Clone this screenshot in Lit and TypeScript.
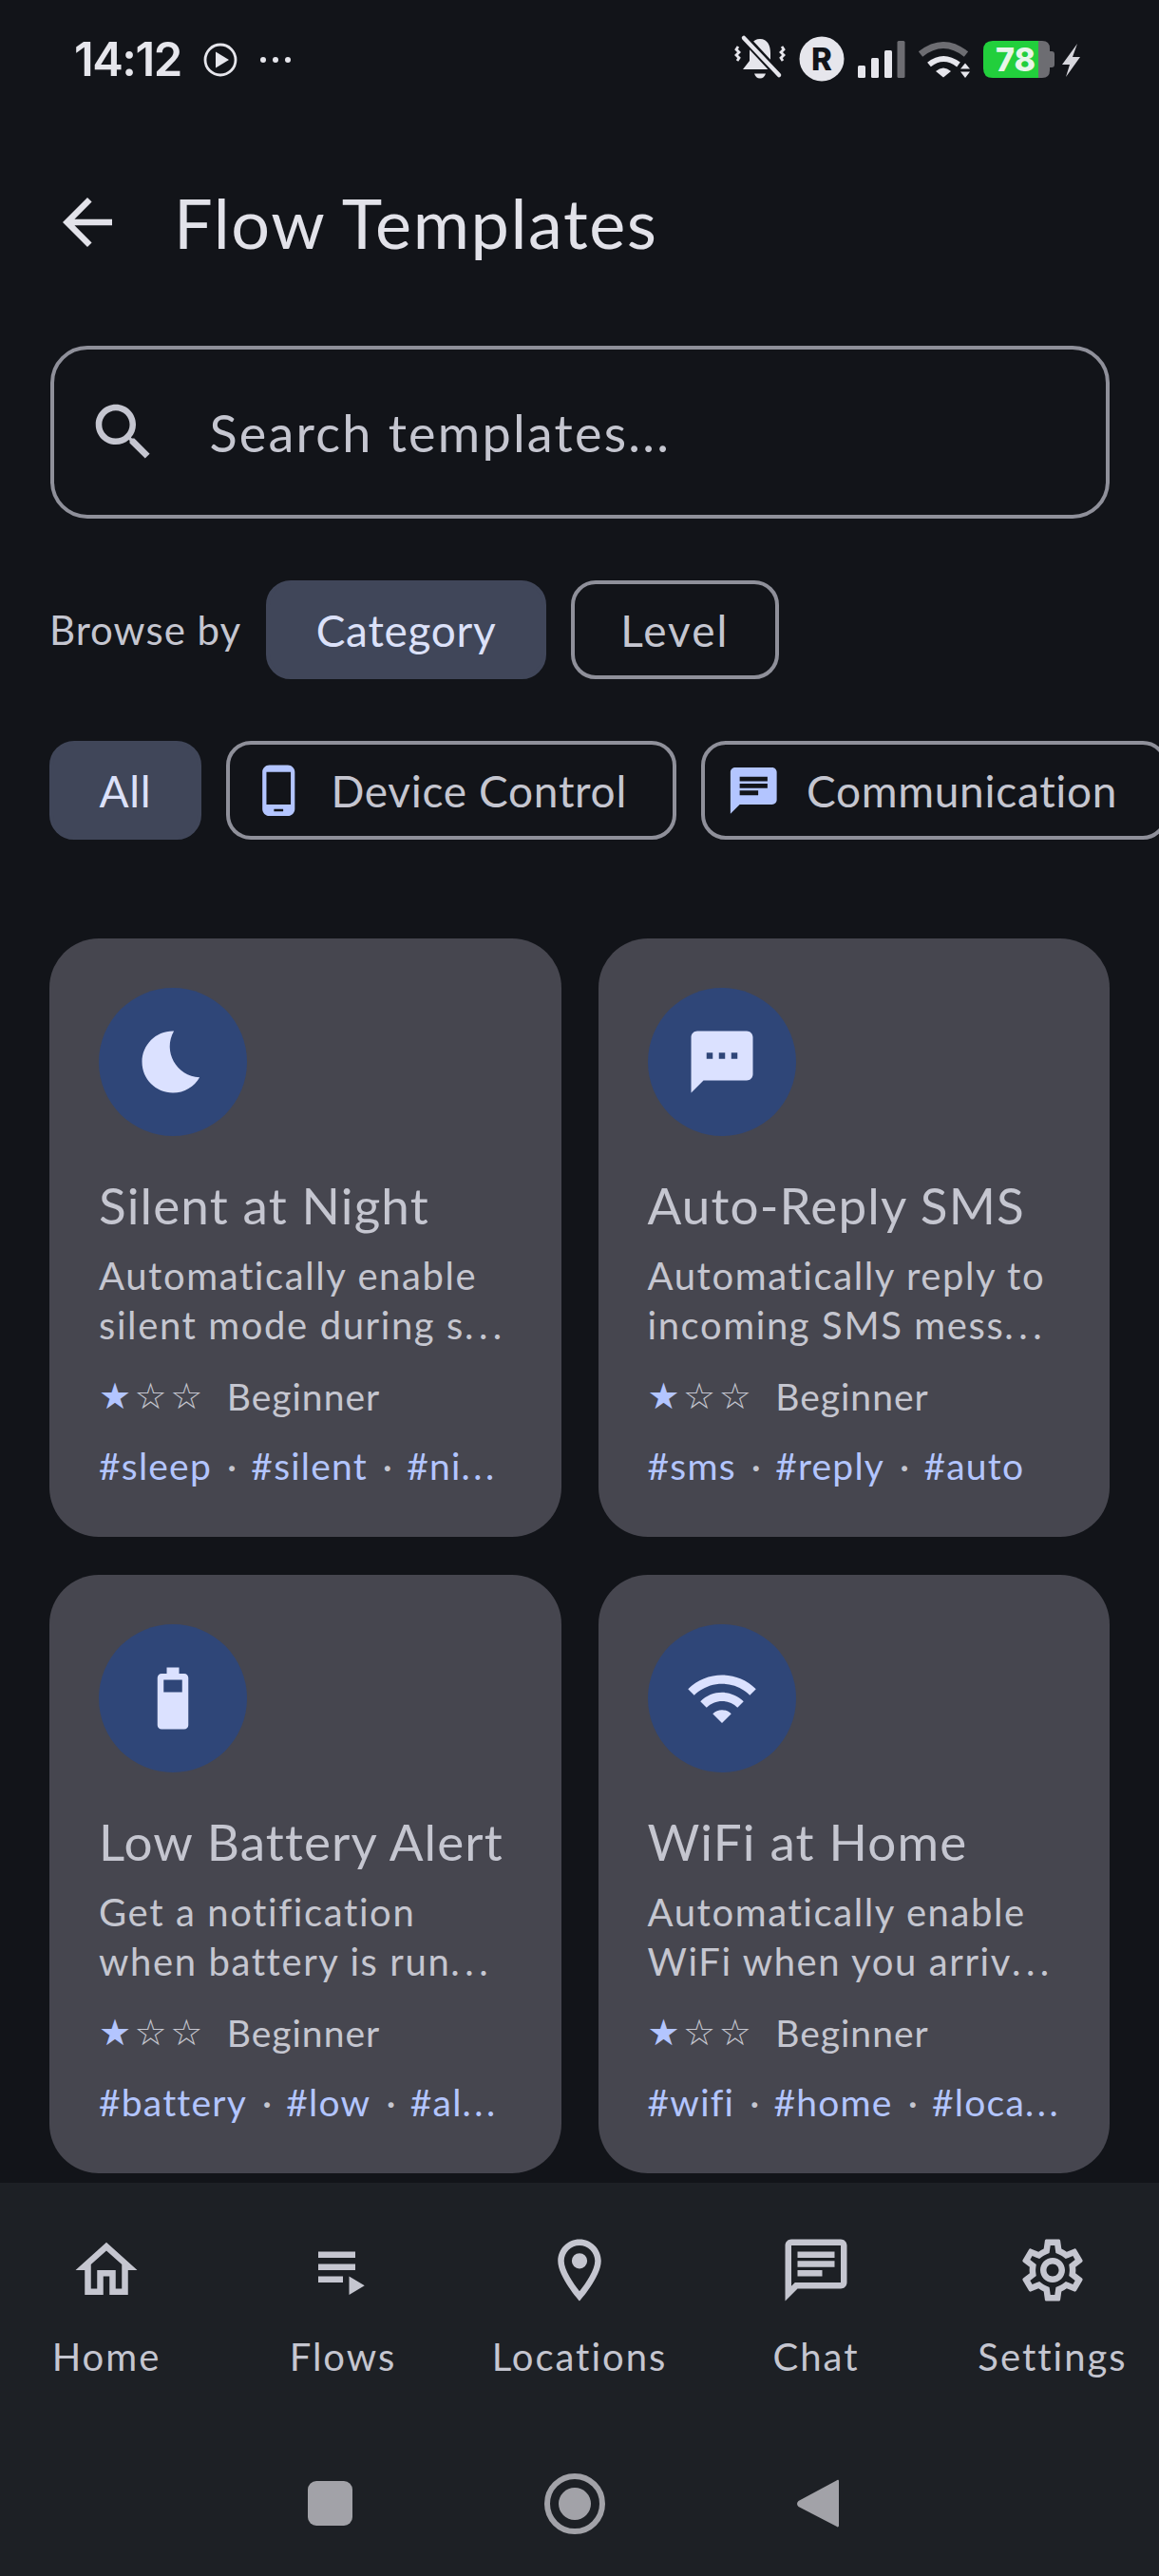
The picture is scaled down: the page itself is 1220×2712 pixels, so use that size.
import { LitElement, html, css, svg } from "lit";
import { customElement } from "lit/decorators.js";

const P = {
  back: "M20 11H7.83l5.59-5.59L12 4l-8 8 8 8 1.41-1.41L7.83 13H20v-2z",
  search: "M15.5 14h-.79l-.28-.27C15.41 12.59 16 11.11 16 9.5 16 5.91 13.09 3 9.5 3S3 5.91 3 9.5 5.91 16 9.5 16c1.61 0 3.09-.59 4.23-1.57l.27.28v.79l5 4.99L20.49 19l-4.99-5zm-6 0C7.01 14 5 11.99 5 9.5S7.01 5 9.5 5 14 7.01 14 9.5 11.99 14 9.5 14z",
  phone: "M16 1H8C6.34 1 5 2.34 5 4v16c0 1.66 1.34 3 3 3h8c1.66 0 3-1.34 3-3V4c0-1.66-1.34-3-3-3zm-2 20h-4v-1h4v1zm3.25-3H6.75V4h10.5v14z",
  chatFill: "M20 2H4c-1.1 0-2 .9-2 2v18l4-4h14c1.1 0 2-.9 2-2V4c0-1.1-.9-2-2-2zM6 9h12v2H6V9zm8 5H6v-2h8v2zm4-6H6V6h12v2z",
  moon: "M12.34 2.02C6.59 1.82 2 6.42 2 12c0 5.52 4.48 10 10 10 3.71 0 6.93-2.02 8.66-5.02-7.51-.25-12.09-8.43-8.32-14.96z",
  sms: "M20 2H4c-1.1 0-1.99.9-1.99 2L2 22l4-4h14c1.1 0 2-.9 2-2V4c0-1.1-.9-2-2-2zM9 11H7V9h2v2zm4 0h-2V9h2v2zm4 0h-2V9h2v2z",
  battery: "M15.67 4H14V2h-4v2H8.33C7.6 4 7 4.6 7 5.33v15.33C7 21.4 7.6 22 8.33 22h7.33c.74 0 1.34-.6 1.34-1.33V5.33C17 4.6 16.4 4 15.67 4zM15 10H9V6h6v4z",
  wifi: "M1 9l2 2c4.97-4.97 13.03-4.97 18 0l2-2C16.93 2.93 7.08 2.93 1 9zm8 8l3 3 3-3c-1.65-1.66-4.34-1.66-6 0zm-4-4l2 2c2.76-2.76 7.24-2.76 10 0l2-2C15.14 9.14 8.87 9.14 5 13z",
  home: "M12 5.69l5 4.5V18h-2v-6H9v6H7v-7.81l5-4.5M12 3L2 12h3v8h6v-6h2v6h6v-8h3L12 3z",
  flows: "M4 10h12v2H4zm0-4h12v2H4zm0 8h8v2H4zm10 0v6l5-3z",
  place: "M12 2C8.13 2 5 5.13 5 9c0 5.25 7 13 7 13s7-7.75 7-13c0-3.87-3.13-7-7-7zM7 9c0-2.76 2.24-5 5-5s5 2.24 5 5c0 2.88-2.88 7.19-5 9.88C9.92 16.21 7 11.85 7 9zM12 6.5a2.5 2.5 0 1 0 0 5 2.5 2.5 0 0 0 0-5z",
  chat: "M20 2H4c-1.1 0-2 .9-2 2v18l4-4h14c1.1 0 2-.9 2-2V4c0-1.1-.9-2-2-2zm0 14H5.17L4 17.17V4h16v12zM6 12h8v2H6zM6 9h12v2H6zM6 6h12v2H6z",
  settings: "M19.43 12.98c.04-.32.07-.64.07-.98 0-.34-.03-.66-.07-.98l2.11-1.65c.19-.15.24-.42.12-.64l-2-3.46c-.09-.16-.26-.25-.44-.25-.06 0-.12.01-.17.03l-2.49 1c-.52-.4-1.08-.73-1.69-.98l-.38-2.65C14.46 2.18 14.25 2 14 2h-4c-.25 0-.46.18-.49.42l-.38 2.65c-.61.25-1.17.59-1.69.98l-2.49-1c-.06-.02-.12-.03-.18-.03-.17 0-.34.09-.43.25l-2 3.46c-.13.22-.07.49.12.64l2.11 1.65c-.04.32-.07.65-.07.98 0 .33.03.66.07.98l-2.11 1.65c-.19.15-.24.42-.12.64l2 3.46c.09.16.26.25.44.25.06 0 .12-.01.17-.03l2.49-1c.52.4 1.08.73 1.69.98l.38 2.65c.03.24.24.42.49.42h4c.25 0 .46-.18.49-.42l.38-2.65c.61-.25 1.17-.59 1.69-.98l2.49 1c.06.02.12.03.18.03.17 0 .34-.09.43-.25l2-3.46c.12-.22.07-.49-.12-.64l-2.11-1.65zm-1.98-1.71c.04.31.05.52.05.73 0 .21-.02.43-.05.73l-.14 1.13.89.7 1.08.84-.7 1.21-1.27-.51-1.04-.42-.9.68c-.43.32-.84.56-1.25.73l-1.06.43-.16 1.13-.2 1.35h-1.4l-.19-1.35-.16-1.13-1.06-.43c-.43-.18-.83-.41-1.23-.71l-.91-.7-1.06.43-1.27.51-.7-1.21 1.08-.84.89-.7-.14-1.13c-.03-.31-.05-.54-.05-.74s.02-.43.05-.73l.14-1.13-.89-.7-1.08-.84.7-1.21 1.27.51 1.04.42.9-.68c.43-.32.84-.56 1.25-.73l1.06-.43.16-1.13.2-1.35h1.39l.19 1.35.16 1.13 1.06.43c.43.18.83.41 1.23.71l.91.7 1.06-.43 1.27-.51.7 1.21-1.07.85-.89.7.14 1.13zM12 8c-2.21 0-4 1.79-4 4s1.79 4 4 4 4-1.79 4-4-1.79-4-4-4zm0 6c-1.1 0-2-.9-2-2s.9-2 2-2 2 .9 2 2-.9 2-2 2z",
};

const icon = (d: string, cls: string) =>
  html`<svg class=${cls} viewBox="0 0 24 24" fill="currentColor"><path fill-rule="evenodd" d=${d}></path></svg>`;

/* A string that ends in "..." gets its dots in a span, since the reference spaces them wider. */
const dotted = (s: string) =>
  s.endsWith("...") ? html`${s.slice(0, -3)}<span class="ell">...</span>` : s;

const CARDS = [
  { icon: P.moon, title: "Silent at Night", desc: ["Automatically enable", "silent mode during s..."], tags: ["#sleep", "#silent", "#ni..."] },
  { icon: P.sms, title: "Auto-Reply SMS", desc: ["Automatically reply to", "incoming SMS mess..."], tags: ["#sms", "#reply", "#auto"] },
  { icon: P.battery, title: "Low Battery Alert", desc: ["Get a notification", "when battery is run..."], tags: ["#battery", "#low", "#al..."] },
  { icon: P.wifi, title: "WiFi at Home", desc: ["Automatically enable", "WiFi when you arriv..."], tags: ["#wifi", "#home", "#loca..."] },
];

const NAV = [
  { icon: P.home, label: "Home" },
  { icon: P.flows, label: "Flows" },
  { icon: P.place, label: "Locations" },
  { icon: P.chat, label: "Chat" },
  { icon: P.settings, label: "Settings" },
];

@customElement("app-root")
export class AppRoot extends LitElement {
  static styles = css`
    :host {
      display: flex;
      flex-direction: column;
      width: 1220px;
      height: 2712px;
      overflow: hidden;
      background: #121419;
      color: #e2e2e9;
      font-family: "Lato", "Noto Sans", sans-serif;
    }
    * { box-sizing: border-box; }
    svg { display: block; flex: none; }
    .status {
      display: flex;
      align-items: center;
      height: 130px;
      padding: 0 80px 4px 78px;
      flex: none;
    }
    .time {
      font: 600 49px/54px "Inter", sans-serif;
      letter-spacing: -1.5px;
      color: #e6e6ec;
    }
    .st-left { margin-left: 21px; }
    .st-right { margin-left: auto; }
    .appbar {
      display: flex;
      align-items: center;
      height: 208px;
      padding-left: 53px;
      flex: none;
    }
    .back { width: 78px; height: 78px; color: #e2e2e9; margin-right: 52px; }
    .title { font-size: 72px; line-height: 90px; font-weight: 400; letter-spacing: 1.6px; }
    .search {
      display: flex;
      align-items: center;
      height: 182px;
      margin: 26px 52.5px 0;
      padding-left: 34px;
      border: 4px solid #8f909a;
      border-radius: 39px;
      color: #c5c6d0;
      flex: none;
    }
    .search svg { width: 78px; height: 78px; margin-right: 52px; }
    .search span { font-size: 54px; letter-spacing: 2.2px; }
    .row {
      display: flex;
      align-items: center;
      height: 104px;
      gap: 26px;
      margin-top: 65px;
      padding-left: 52px;
      flex: none;
      overflow: hidden;
    }
    .browse { font-size: 42px; color: #c5c6d0; letter-spacing: 1px; }
    .chip {
      display: flex;
      align-items: center;
      height: 104px;
      padding: 0 48.5px;
      border: 4px solid #8f909a;
      border-radius: 26px;
      font-size: 46px;
      letter-spacing: 0.7px;
      color: #c5c6d0;
      white-space: nowrap;
      flex: none;
    }
    .chip.lvl { letter-spacing: 2px; }
    .chip.on { background: #404659; border-color: #404659; color: #dce1f9; }
    .chip.ic { padding-left: 22px; gap: 26px; }
    .chip-ic { width: 58.5px; height: 58.5px; color: #b3c5ff; }
    .grid {
      display: grid;
      grid-template-columns: minmax(0, 1fr) minmax(0, 1fr);
      gap: 40px 39px;
      margin: 104px 52px 0;
      flex: none;
    }
    .card {
      background: #46464f;
      border-radius: 52px;
      padding: 52px;
      height: 630px;
      color: #c5c6d0;
      white-space: nowrap;
      overflow: hidden;
    }
    .circle {
      display: flex;
      align-items: center;
      justify-content: center;
      width: 156px;
      height: 156px;
      border-radius: 50%;
      background: #2f4678;
      color: #dbe1ff;
    }
    .circle svg { width: 78px; height: 78px; }
    .c-title { font-size: 53px; line-height: 72px; margin-top: 37px; letter-spacing: 1.15px; }
    .c-desc { font-size: 40px; line-height: 52px; margin-top: 12px; letter-spacing: 1.6px; }
    .c-desc .ell { letter-spacing: 5.5px; }
    .meta { display: flex; align-items: center; height: 52px; margin-top: 23px; font-size: 39px; letter-spacing: 1px; }
    .stars { font-family: "DejaVu Sans", sans-serif; font-size: 38px; letter-spacing: 3.5px; margin-right: 22px; line-height: 52px; }
    .stars b { font-weight: 400; color: #b3c5ff; }
    .tags { display: flex; height: 52px; margin-top: 21px; font-size: 39px; line-height: 52px; color: #b3c5ff; letter-spacing: 1.2px; }
    .tags .ell { letter-spacing: 3.5px; }
    .dot { margin: 0 14px 0 16px; color: #c5c6d0; }
    .nav {
      margin-top: 10px;
      background: #1d2025;
      flex: 1;
      display: flex;
      flex-direction: column;
    }
    .tabs {
      display: grid;
      grid-template-columns: repeat(5, 249px);
      justify-content: center;
      padding-top: 53px;
      color: #c5c6d0;
    }
    .tab { display: flex; flex-direction: column; align-items: center; gap: 26px; }
    .tab svg { width: 78px; height: 78px; }
    .tab span { font-size: 40px; line-height: 52px; letter-spacing: 2px; white-space: nowrap; }
    .sys {
      display: flex;
      align-items: center;
      gap: 202px;
      padding: 97px 0 0 324px;
      color: #a2a2a8;
    }
  `;

  private statusRight() {
    return svg`<svg class="st-right" width="370" height="54" viewBox="770 36 370 54">
      <g fill="#e6e6ec">
        <path d="M800 41c8 0 11 7 11 15v8l7 9h-36l7-9v-8c0-8 3-15 11-15z"/>
        <path d="M794 77.500h12c-1 3-3 5-6 5s-5-2-6-5z"/>
      </g>
      <line x1="780" y1="36" x2="820" y2="79" stroke="#121419" stroke-width="9"/>
      <line x1="783" y1="40" x2="820" y2="79" stroke="#e6e6ec" stroke-width="4.500" stroke-linecap="round"/>
      <g fill="none" stroke="#e6e6ec" stroke-width="2.800">
        <path d="M777 49l-2 3 3 3-3 3 3 3-2 3"/>
        <path d="M823 49l2 3-3 3 3 3-3 3 2 3"/>
      </g>
      <circle cx="865" cy="62" r="23.500" fill="#e6e6ec"/>
      <text x="865" y="74" text-anchor="middle" font-family="Inter, sans-serif" font-weight="800" font-size="33" fill="#121419">R</text>
      <g fill="#e6e6ec">
        <rect x="903" y="69" width="8" height="13" rx="1.500"/>
        <rect x="917" y="61" width="8" height="21" rx="1.500"/>
        <rect x="931" y="53" width="8" height="29" rx="1.500"/>
      </g>
      <rect x="944.500" y="43" width="8" height="39" rx="1.500" fill="#6d6d72"/>
      <path d="M969 57q24-19 48 0" fill="none" stroke="#6d6d72" stroke-width="7"/>
      <path d="M978 68q15-12 31 0" fill="none" stroke="#e6e6ec" stroke-width="6"/>
      <path d="M985 75q8-7 16 0l-8 6.500z" fill="#e6e6ec"/>
      <path d="M1016 66.500l5 6h-10zM1016 82l5-6.500h-10z" fill="#e6e6ec"/>
      <path d="M1090 43h7q8 0 8 8v23q0 8-8 8h-7zM1105 54h2q3 0 3 3v11q0 3-3 3h-2z" fill="#6d6d72"/>
      <path d="M1093 43h-48q-10 0-10 10v19q0 10 10 10h48z" fill="#22cf3c"/>
      <text x="1069" y="75" text-anchor="middle" font-family="Inter, sans-serif" font-weight="800" font-size="34" fill="#e8f5e9">78</text>
      <path d="M1134 46l-16 22h8l-4 13 15-21h-8z" fill="#d6d6dc"/>
    </svg>`;
  }

  render() {
    return html`
      <div class="status">
        <span class="time">14:12</span>
        <svg class="st-left" width="100" height="40" viewBox="0 0 100 40" fill="#e6e6ec">
          <circle cx="20" cy="20" r="16" fill="none" stroke="#e6e6ec" stroke-width="2.800"/>
          <path d="M15 11.500l14 8.500-14 8.500z"/>
          <circle cx="65" cy="20" r="3"/><circle cx="78" cy="20" r="3"/><circle cx="91" cy="20" r="3"/>
        </svg>
        ${this.statusRight()}
      </div>

      <div class="appbar">
        ${icon(P.back, "back")}
        <span class="title">Flow Templates</span>
      </div>

      <div class="search">
        ${icon(P.search, "")}
        <span>Search templates...</span>
      </div>

      <div class="row">
        <span class="browse">Browse by</span>
        <span class="chip on">Category</span>
        <span class="chip lvl">Level</span>
      </div>

      <div class="row">
        <span class="chip on">All</span>
        <span class="chip ic">${icon(P.phone, "chip-ic")}Device Control</span>
        <span class="chip ic">${icon(P.chatFill, "chip-ic")}Communication</span>
      </div>

      <div class="grid">
        ${CARDS.map(
          (c) => html`<div class="card">
            <div class="circle">${icon(c.icon, "")}</div>
            <div class="c-title">${c.title}</div>
            <div class="c-desc">${c.desc.map((l) => html`<div>${dotted(l)}</div>`)}</div>
            <div class="meta"><span class="stars"><b>★</b>☆☆</span>Beginner</div>
            <div class="tags">
              ${c.tags.map((t, i) => html`${i ? html`<span class="dot">·</span>` : ""}<span>${dotted(t)}</span>`)}
            </div>
          </div>`
        )}
      </div>

      <div class="nav">
        <div class="tabs">
          ${NAV.map((n) => html`<div class="tab">${icon(n.icon, "")}<span>${n.label}</span></div>`)}
        </div>
        <div class="sys">
          <svg width="47" height="64" viewBox="0 0 47 64" fill="currentColor"><rect y="8" width="47" height="47" rx="9"/></svg>
          <svg width="64" height="64" viewBox="0 0 64 64" fill="currentColor">
            <circle cx="32" cy="32" r="29" fill="none" stroke="currentColor" stroke-width="6"/>
            <circle cx="32" cy="32" r="17"/>
          </svg>
          <svg width="44" height="64" viewBox="0 0 44 64" fill="currentColor">
            <path d="M44 8v47c0 1.500-1.500 2-2.500.8L1.500 35c-2-2-2-4 0-6L41.500 7.500C42.500 6.500 44 6.500 44 8z"/>
          </svg>
        </div>
      </div>
    `;
  }
}
